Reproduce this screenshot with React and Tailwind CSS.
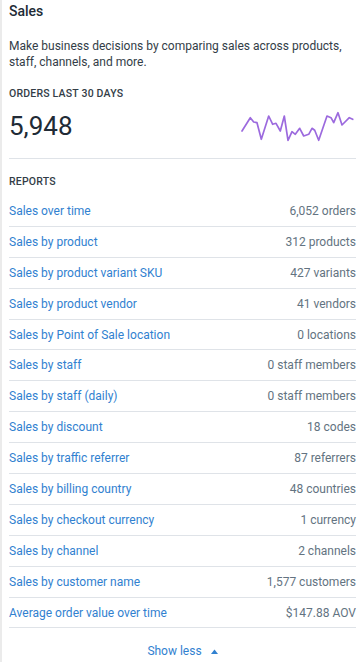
import React from "react";

const rows = [
  ["Sales over time", "6,052 orders"],
  ["Sales by product", "312 products"],
  ["Sales by product variant SKU", "427 variants"],
  ["Sales by product vendor", "41 vendors"],
  ["Sales by Point of Sale location", "0 locations"],
  ["Sales by staff", "0 staff members"],
  ["Sales by staff (daily)", "0 staff members"],
  ["Sales by discount", "18 codes"],
  ["Sales by traffic referrer", "87 referrers"],
  ["Sales by billing country", "48 countries"],
  ["Sales by checkout currency", "1 currency"],
  ["Sales by channel", "2 channels"],
  ["Sales by customer name", "1,577 customers"],
  ["Average order value over time", "$147.88 AOV"],
];

const pts = [
  [240, 130], [248.3, 116.7], [251.7, 121], [255, 121.7], [259.3, 138.3], [266.7, 115],
  [270.7, 123.3], [274, 122.3], [278.3, 130], [282.3, 115], [286, 139.3], [290, 130.7],
  [293.3, 133.3], [297.7, 127.3], [301.7, 135], [306.7, 133.3], [310, 127.3], [312.7, 129.3],
  [316.7, 139.3], [325, 115], [329, 116.7], [331.7, 121.7], [336, 111.7], [340, 124],
  [347.3, 116.7], [350.7, 118.3],
].map(([x, y]) => `${(x - 239).toFixed(1)},${(y - 109).toFixed(1)}`).join(" ");

export default function App() {
  return (
    <div
      className="w-[364px] h-[662px] bg-white border-l-2 border-[#ebebeb] pl-[7px] pr-[8px] text-[#212b36] overflow-hidden"
      style={{ fontFamily: "Roboto, 'Liberation Sans', sans-serif" }}
    >
      <div className="pt-[2px] text-[14px] leading-[18px] font-medium">Sales</div>
      <p className="mt-[18px] text-[12px] leading-[16px] text-[#333d47]">
        Make business decisions by comparing sales across products, staff, channels, and more.
      </p>
      <div className="mt-[18px] text-[10.5px] leading-[12px] font-medium tracking-[0.2px] text-[#333d47]">
        ORDERS LAST 30 DAYS
      </div>
      <div className="mt-[9px] flex items-center justify-between h-[34px]">
        <span className="text-[26px] leading-[28px] font-normal text-[#212b36]">5,948</span>
        <svg width="114" height="32" viewBox="0 0 114 32" className="mr-[1px]">
          <polyline points={pts} fill="none" stroke="#9c6ade" strokeWidth="1.7" strokeLinejoin="round" strokeLinecap="round" />
        </svg>
      </div>
      <div className="mt-[15px] border-t border-[#dfe3e8]" />
      <div className="mt-[17px] text-[10.5px] leading-[12px] font-medium tracking-[0.2px] text-[#333d47]">
        REPORTS
      </div>
      <div className="mt-[8px]">
        {rows.map(([a, b]) => (
          <div key={a} className="h-[30.9px] flex items-center justify-between border-b border-[#dfe3e8] text-[12px]">
            <span className="text-[#3181d0]">{a}</span>
            <span className="text-[#637381]">{b}</span>
          </div>
        ))}
      </div>
      <div className="flex items-center justify-center mt-[14px] text-[12px] text-[#3181d0] gap-[9px]">
        <span>Show less</span>
        <svg width="7" height="5" viewBox="0 0 7 5"><path d="M0 5 L3.5 0.5 L7 5 Z" fill="#3181d0" /></svg>
      </div>
    </div>
  );
}
